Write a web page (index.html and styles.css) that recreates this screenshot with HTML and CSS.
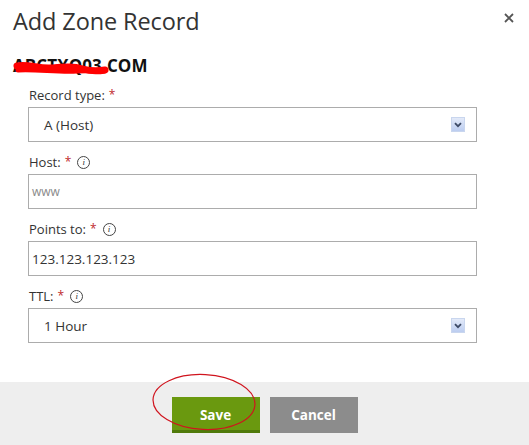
FILE: index.html
```html
<!DOCTYPE html>
<html>
<head>
<meta charset="utf-8">
<link rel="stylesheet" href="styles.css">
</head>
<body>
<div class="dialog">
  <div class="header">
    <h1 class="title">Add Zone Record</h1>
    <button class="close" aria-label="Close">
      <svg width="10" height="10" viewBox="0 0 10 10"><path d="M1 1 L9 9 M9 1 L1 9" stroke="#555" stroke-width="1.8" fill="none"/></svg>
    </button>
  </div>
  <div class="domain">
    <span class="domain-text">ABCTXQ03.COM</span>
    <svg class="scribble" width="96" height="18" viewBox="0 0 96 18"><path d="M4 7 C 16 5, 26 10, 38 9 S 60 7, 70 10 S 86 12, 92 11" stroke="#f00" stroke-width="7" stroke-linecap="round" fill="none"/><path d="M5 11 C 24 10, 44 13, 64 12 S 84 13, 91 12" stroke="#f00" stroke-width="5" stroke-linecap="round" fill="none"/></svg>
  </div>
  <div class="form">
    <div class="field">
      <div class="label">Record type: <span class="req">*</span></div>
      <div class="select">
        <span class="value">A (Host)</span>
        <span class="chev"><svg width="8" height="6" viewBox="0 0 8 6"><path d="M1 1.2 L4 4.2 L7 1.2" stroke="#3d4a66" stroke-width="1.8" fill="none"/></svg></span>
      </div>
    </div>
    <div class="field">
      <div class="label">Host: <span class="req">*</span> <span class="info">i</span></div>
      <div class="input placeholder">www</div>
    </div>
    <div class="field">
      <div class="label">Points to: <span class="req">*</span> <span class="info">i</span></div>
      <div class="input">123.123.123.123</div>
    </div>
    <div class="field">
      <div class="label">TTL: <span class="req">*</span> <span class="info">i</span></div>
      <div class="select">
        <span class="value">1 Hour</span>
        <span class="chev"><svg width="8" height="6" viewBox="0 0 8 6"><path d="M1 1.2 L4 4.2 L7 1.2" stroke="#3d4a66" stroke-width="1.8" fill="none"/></svg></span>
      </div>
    </div>
  </div>
  <div class="footer">
    <button class="btn save">Save</button>
    <button class="btn cancel">Cancel</button>
    <svg class="circle" width="110" height="62" viewBox="0 0 110 62"><ellipse cx="55" cy="31" rx="51" ry="27.5" transform="rotate(3 55 31)" stroke="#d0141e" stroke-width="1.2" fill="none"/></svg>
  </div>
</div>
</body>
</html>
```

FILE: styles.css
```css
* { box-sizing: border-box; }
html, body { margin: 0; padding: 0; background: #fff; }
body { font-family: "Open Sans", "Noto Sans", sans-serif; color: #333; }
.dialog { width: 529px; height: 445px; display: flex; flex-direction: column; position: relative; }
.header { display: flex; justify-content: space-between; align-items: flex-start; padding: 6px 0 0 13px; }
.title { margin: 0; font-weight: 400; font-size: 23.5px; line-height: 30px; color: #333; letter-spacing: -0.1px; }
.close { background: none; border: 0; padding: 0; margin: 6px 14px 0 0; width: 12px; height: 12px; display: flex; align-items: center; justify-content: center; }
.domain { position: relative; margin: 20px 0 0 13px; height: 20px; line-height: 20px; font-weight: 700; font-size: 17px; color: #111; letter-spacing: 0.1px; }
.scribble { position: absolute; left: 0; top: 3px; }
.form { padding: 10px 52px 0 28px; }
.field { margin-bottom: 11px; }
.label { font-size: 13px; line-height: 18px; margin: 0 0 3px 1px; color: #333; display: flex; align-items: center; }
.req { color: #c0282d; margin: 0 4px 0 4px; font-size: 12px; }
.info { display: inline-flex; width: 13px; height: 13px; border: 1px solid #444; border-radius: 50%; font-size: 9px; font-style: italic; font-family: "Liberation Serif", serif; line-height: 1; align-items: center; justify-content: center; margin-left: 2px; color: #333; }
.select, .input { height: 35px; border: 1px solid #acacac; display: flex; align-items: center; background: #fff; }
.select { justify-content: space-between; padding: 0 11px 0 15px; font-size: 13.5px; }
.chev { width: 14px; height: 15px; border: 1px solid #c9d6ee; background: linear-gradient(#e3eaf9, #bccdf0); display: flex; align-items: center; justify-content: center; }
.input { padding: 0 3px; font-size: 13.5px; color: #333; }
.placeholder { color: #8a8a8a; font-size: 12px; }
.footer { margin-top: auto; height: 63px; background: #eeeeee; display: flex; justify-content: center; gap: 10px; padding-top: 15px; position: relative; }
.btn { width: 88px; height: 36px; border: 0; color: #fff; font-family: "Open Sans", sans-serif; font-weight: 700; font-size: 13.5px; padding: 0; }
.save { background: #6a990f; border-bottom: 3px solid #4f7a0a; padding-top: 2px; }
.cancel { background: #8c8c8c; }
.circle { position: absolute; left: 149px; top: -11px; }
```
